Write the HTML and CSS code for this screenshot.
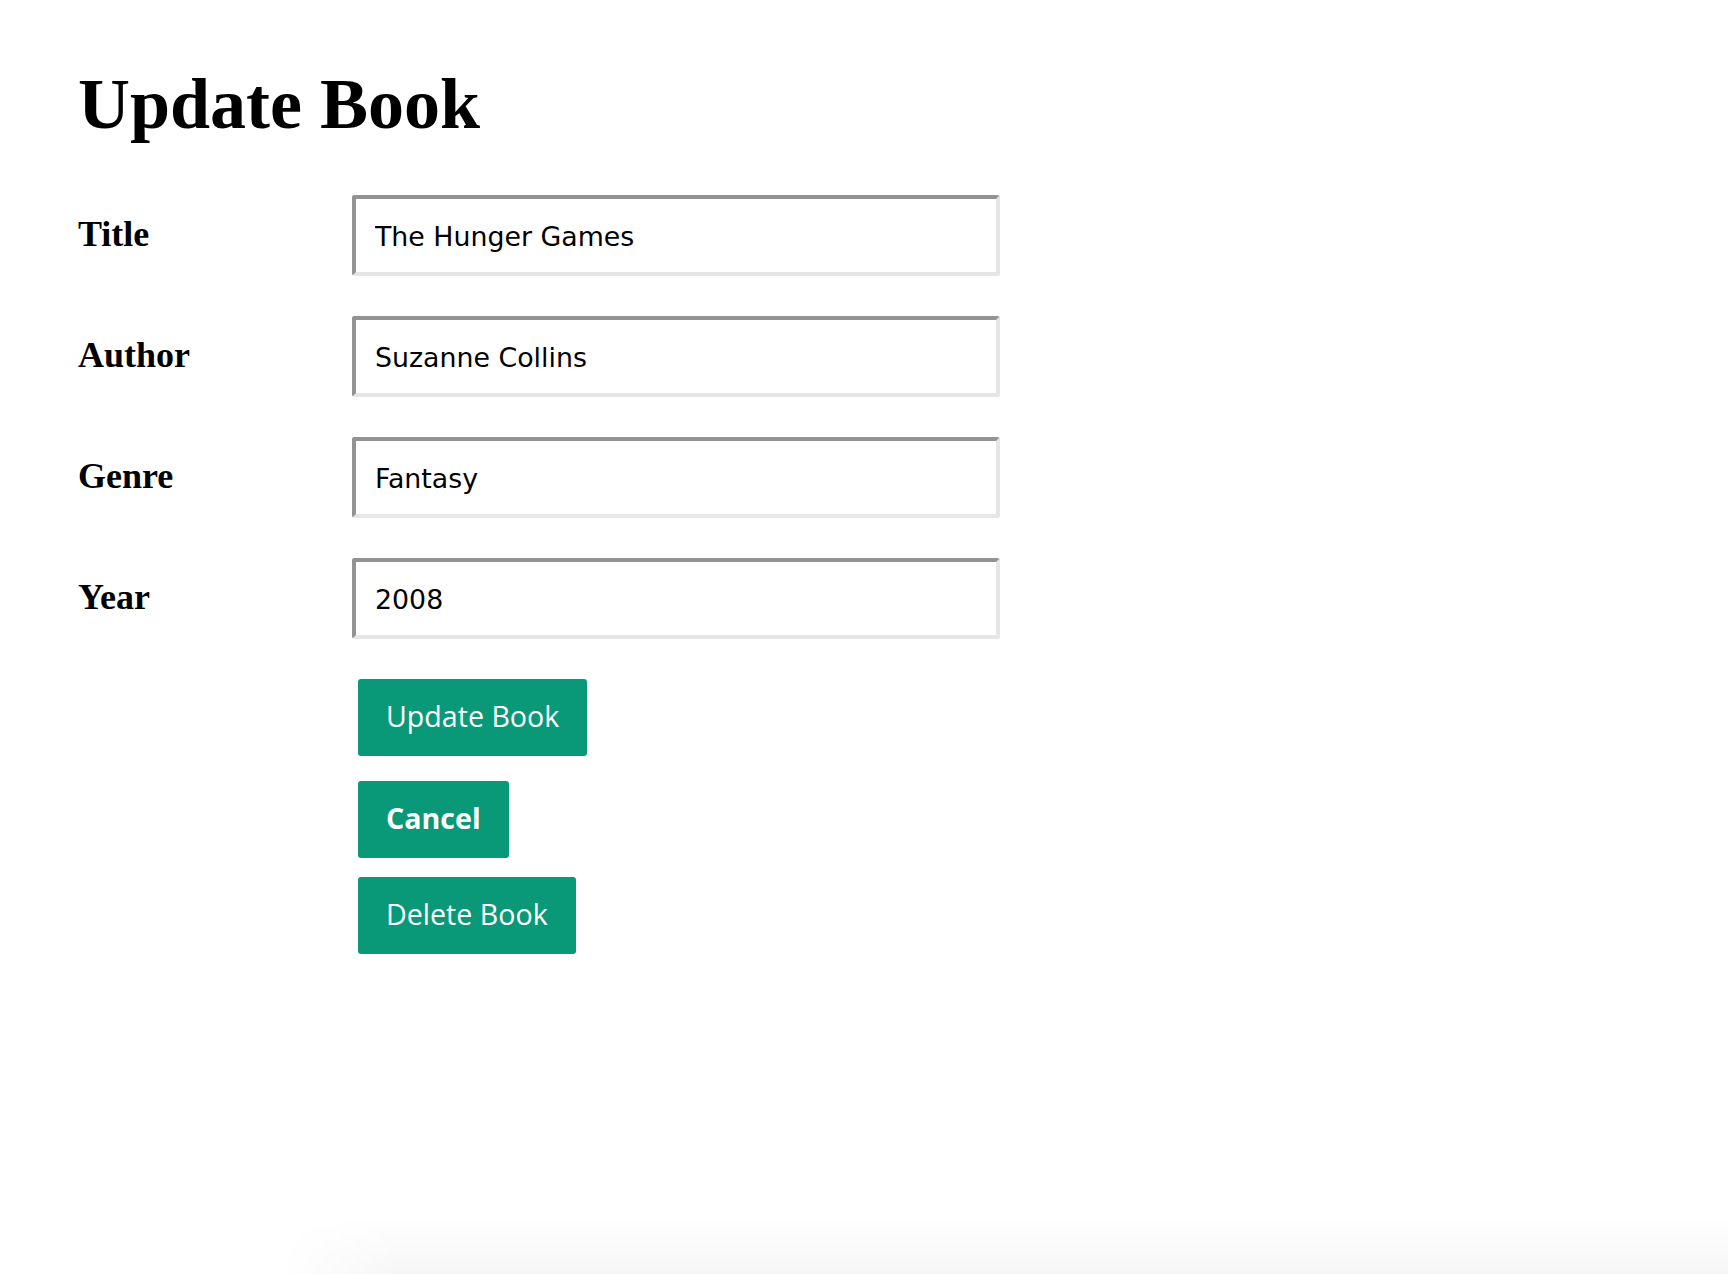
FILE: index.html
```html
<!DOCTYPE html>
<html lang="en">
<head>
<meta charset="utf-8">
<title>Update Book</title>
<link rel="stylesheet" href="styles.css">
</head>
<body>
<main class="page">
  <h1 class="page-title">Update Book</h1>
  <form class="book-form">
    <label class="field-label" for="title">Title</label>
    <input class="field-input" id="title" type="text" value="The Hunger Games">
    <label class="field-label" for="author">Author</label>
    <input class="field-input" id="author" type="text" value="Suzanne Collins">
    <label class="field-label" for="genre">Genre</label>
    <input class="field-input" id="genre" type="text" value="Fantasy">
    <label class="field-label" for="year">Year</label>
    <input class="field-input" id="year" type="text" value="2008">
  </form>
  <div class="actions">
    <button class="btn btn-update" type="button">Update Book</button>
    <button class="btn btn-cancel" type="button">Cancel</button>
    <button class="btn btn-delete" type="button">Delete Book</button>
  </div>
</main>
<div class="bottom-shade"></div>
</body>
</html>
```
FILE: styles.css
```css
html, body {
  margin: 0;
  padding: 0;
  background: #ffffff;
}

body {
  font-family: "Liberation Serif", "Times New Roman", serif;
  color: #000000;
}

.page {
  padding: 64px 0 0 78px;
}

.page-title {
  margin: 0;
  font-size: 72px;
  line-height: 80px;
  font-weight: bold;
}

.book-form {
  margin-top: 51px;
  display: grid;
  grid-template-columns: 274px 648px;
  grid-auto-rows: 81px;
  row-gap: 40px;
}

.field-label {
  align-self: center;
  font-size: 36px;
  line-height: 40px;
  font-weight: bold;
  padding-bottom: 3px;
}

.field-input {
  box-sizing: border-box;
  width: 648px;
  height: 81px;
  margin: 0;
  padding: 2px 19px 0;
  border-style: solid;
  border-width: 4px;
  border-color: #939393 #e6e6e6 #e6e6e6 #939393;
  border-radius: 3px;
  background: #ffffff;
  font-family: "DejaVu Sans", Verdana, sans-serif;
  font-size: 26.8px;
  color: #000000;
  outline: none;
}

.actions {
  margin: 40px 0 0 280px;
  display: flex;
  flex-direction: column;
  align-items: flex-start;
}

.btn {
  box-sizing: border-box;
  height: 77px;
  padding: 0 28px 5px;
  border: none;
  border-radius: 3px;
  background: #099978;
  color: #ffffff;
  font-family: "Open Sans", "Noto Sans", sans-serif;
  font-size: 28.6px;
  font-weight: normal;
  display: flex;
  align-items: center;
  cursor: pointer;
}

.btn-cancel {
  margin-top: 25px;
  font-weight: bold;
}

.btn-delete {
  margin-top: 19px;
}

.bottom-shade {
  position: fixed;
  left: 280px;
  right: 0;
  bottom: 0;
  height: 56px;
  background: linear-gradient(to bottom, rgba(0, 0, 0, 0), rgba(0, 0, 0, 0.035));
  -webkit-mask-image: linear-gradient(to right, transparent, #000 120px);
  mask-image: linear-gradient(to right, transparent, #000 120px);
  pointer-events: none;
}
```
